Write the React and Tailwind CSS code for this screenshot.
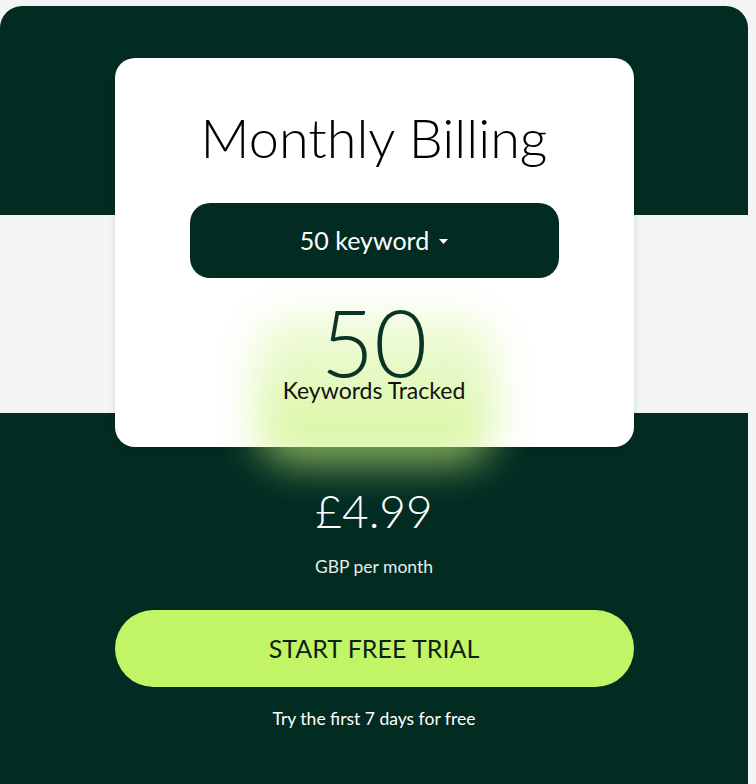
export default function App() {
  return (
    <div className="min-h-[784px] w-[756px] bg-[#f2f5f4] pt-[6px] font-['Lato',sans-serif]">
      <div className="h-[778px] w-[748px] rounded-t-[22px] bg-[linear-gradient(to_bottom,#022c22_209px,#f2f5f4_209px,#f2f5f4_407px,#022c22_407px)] pt-[52px] flex flex-col items-center">
        <div className="relative w-[519px] rounded-[20px] bg-white pt-[53px] pb-[45px] shadow-[0_2px_6px_rgba(0,0,0,0.12)]">
          <div className="pointer-events-none absolute left-[140px] top-[255px] h-[150px] w-[240px] rounded-[40px] bg-[linear-gradient(to_bottom,rgba(200,242,122,0.25),rgba(200,242,122,0.75))] blur-[20px]"></div>
          <div className="relative z-10 flex flex-col items-center">
            <h1 className="text-[54px] leading-none font-light text-black">Monthly Billing</h1>
            <button className="mt-[38px] flex h-[75px] w-[369px] items-center justify-center gap-[10px] rounded-[20px] bg-[#022c22] text-[25px] text-white">
              <span className="leading-none">50 keyword</span>
              <svg width="9" height="5" viewBox="0 0 9 5" className="mt-[1px]">
                <path d="M0 0 L9 0 L4.5 5 Z" fill="white" />
              </svg>
            </button>
            <div className="mt-[18px] text-[92px] leading-none font-light text-[#0b3327]">50</div>
            <div className="-mt-[9px] text-[23px] leading-none text-[#111]">Keywords Tracked</div>
          </div>
        </div>
        <div className="mt-[41px] text-[46px] leading-none font-light text-white">£4.99</div>
        <div className="mt-[24px] text-[17.5px] leading-none text-[#e8ecea]">GBP per month</div>
        <button className="mt-[34px] flex h-[77px] w-[519px] items-center justify-center rounded-full bg-[#c2f565] text-[25px] leading-none text-[#0d1f17]">
          START FREE TRIAL
        </button>
        <div className="mt-[23px] text-[17.5px] leading-none text-white">Try the first 7 days for free</div>
      </div>
    </div>
  );
}
